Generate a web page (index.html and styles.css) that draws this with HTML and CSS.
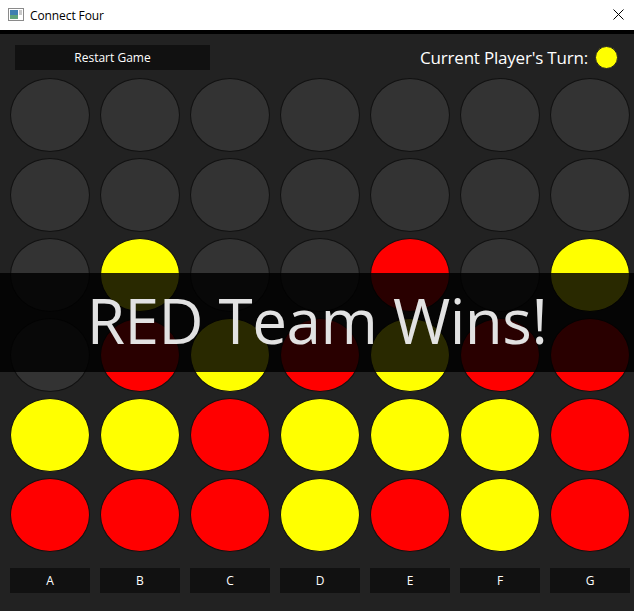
FILE: index.html
```html
<!DOCTYPE html>
<html>
<head>
<meta charset="utf-8">
<title>Connect Four</title>
<link rel="stylesheet" href="styles.css">
</head>
<body>
<div class="window">
  <div class="titlebar">
    <svg class="appicon" width="16" height="13" viewBox="0 0 16 13">
      <rect x="0.5" y="0.5" width="15" height="12" fill="#fff" stroke="#8a8a8a"/>
      <rect x="2" y="2" width="8" height="9" fill="#3d7fb0"/>
      <rect x="2" y="7" width="8" height="4" fill="#5fa37a"/>
      <rect x="11" y="2" width="3" height="5" fill="#c9c9c9"/>
    </svg>
    <span class="title">Connect Four</span>
    <svg class="close" width="11" height="11" viewBox="0 0 11 11">
      <path d="M0.5 0.5 L10.5 10.5 M10.5 0.5 L0.5 10.5" stroke="#000" stroke-width="1"/>
    </svg>
  </div>
  <div class="app">
    <div class="topbar">
      <div class="btn restart">Restart Game</div>
      <div class="turn">Current Player's Turn: <span class="disc-small"></span></div>
    </div>
    <div class="board">
      <div class="cell"></div><div class="cell"></div><div class="cell"></div><div class="cell"></div><div class="cell"></div><div class="cell"></div><div class="cell"></div>
      <div class="cell"></div><div class="cell"></div><div class="cell"></div><div class="cell"></div><div class="cell"></div><div class="cell"></div><div class="cell"></div>
      <div class="cell"></div><div class="cell y"></div><div class="cell"></div><div class="cell"></div><div class="cell r"></div><div class="cell"></div><div class="cell y"></div>
      <div class="cell"></div><div class="cell r"></div><div class="cell y"></div><div class="cell r"></div><div class="cell y"></div><div class="cell r"></div><div class="cell r"></div>
      <div class="cell y"></div><div class="cell y"></div><div class="cell r"></div><div class="cell y"></div><div class="cell y"></div><div class="cell y"></div><div class="cell r"></div>
      <div class="cell r"></div><div class="cell r"></div><div class="cell r"></div><div class="cell y"></div><div class="cell r"></div><div class="cell y"></div><div class="cell r"></div>
    </div>
    <div class="cols">
      <div class="btn">A</div><div class="btn">B</div><div class="btn">C</div><div class="btn">D</div><div class="btn">E</div><div class="btn">F</div><div class="btn">G</div>
    </div>
    <div class="overlay">RED Team Wins!</div>
  </div>
</div>
</body>
</html>
```
FILE: styles.css
```css
* { box-sizing: border-box; }
html, body { margin: 0; padding: 0; }
body {
  width: 634px;
  height: 611px;
  overflow: hidden;
  font-family: "Open Sans", "Noto Sans", sans-serif;
  background: #222;
}
.window { width: 634px; height: 611px; display: flex; flex-direction: column; }
.titlebar {
  background: #fff;
  display: flex;
  align-items: center;
  padding-left: 8px;
  border-bottom: 4px solid #000;
  height: 34px;
}
.appicon { flex: none; margin-top: -1px; }
.title {
  font-size: 12px;
  color: #000;
  margin-left: 6px;
  flex: 1;
  letter-spacing: -0.1px;
}
.close { margin-right: 10px; margin-top: -1px; }
.app {
  position: relative;
  flex: 1;
  background: #222;
  padding: 11px 10px 0 10px;
}
.topbar {
  display: flex;
  align-items: center;
  justify-content: space-between;
  height: 25px;
  padding-left: 5px;
  padding-right: 6px;
}
.btn {
  background: #111;
  color: #fff;
  font-size: 12px;
  height: 25px;
  display: flex;
  align-items: center;
  justify-content: center;
}
.restart { width: 195px; }
.turn {
  display: flex;
  align-items: center;
  color: #fff;
  font-size: 17px;
  letter-spacing: -0.2px;
}
.disc-small {
  width: 23px;
  height: 23px;
  border-radius: 50%;
  background: #ff0;
  border: 1px solid #222;
  margin-left: 7px;
}
.board {
  margin-top: 8px;
  display: grid;
  grid-template-columns: repeat(7, 80px);
  grid-auto-rows: 74px;
  column-gap: 10px;
  row-gap: 6px;
}
.cell {
  border-radius: 50%;
  background: #333;
  border: 1px solid #111;
}
.cell.y { background: #ff0; }
.cell.r { background: #f00; }
.cols {
  margin-top: 16px;
  display: grid;
  grid-template-columns: repeat(7, 80px);
  column-gap: 10px;
}
.overlay {
  position: absolute;
  left: 0;
  right: 0;
  top: 239px;
  height: 99px;
  background: rgba(0, 0, 0, 0.84);
  color: #e2e2e2;
  font-size: 62px;
  display: flex;
  align-items: center;
  justify-content: center;
  letter-spacing: -0.5px;
  padding-bottom: 6px;
}
```
